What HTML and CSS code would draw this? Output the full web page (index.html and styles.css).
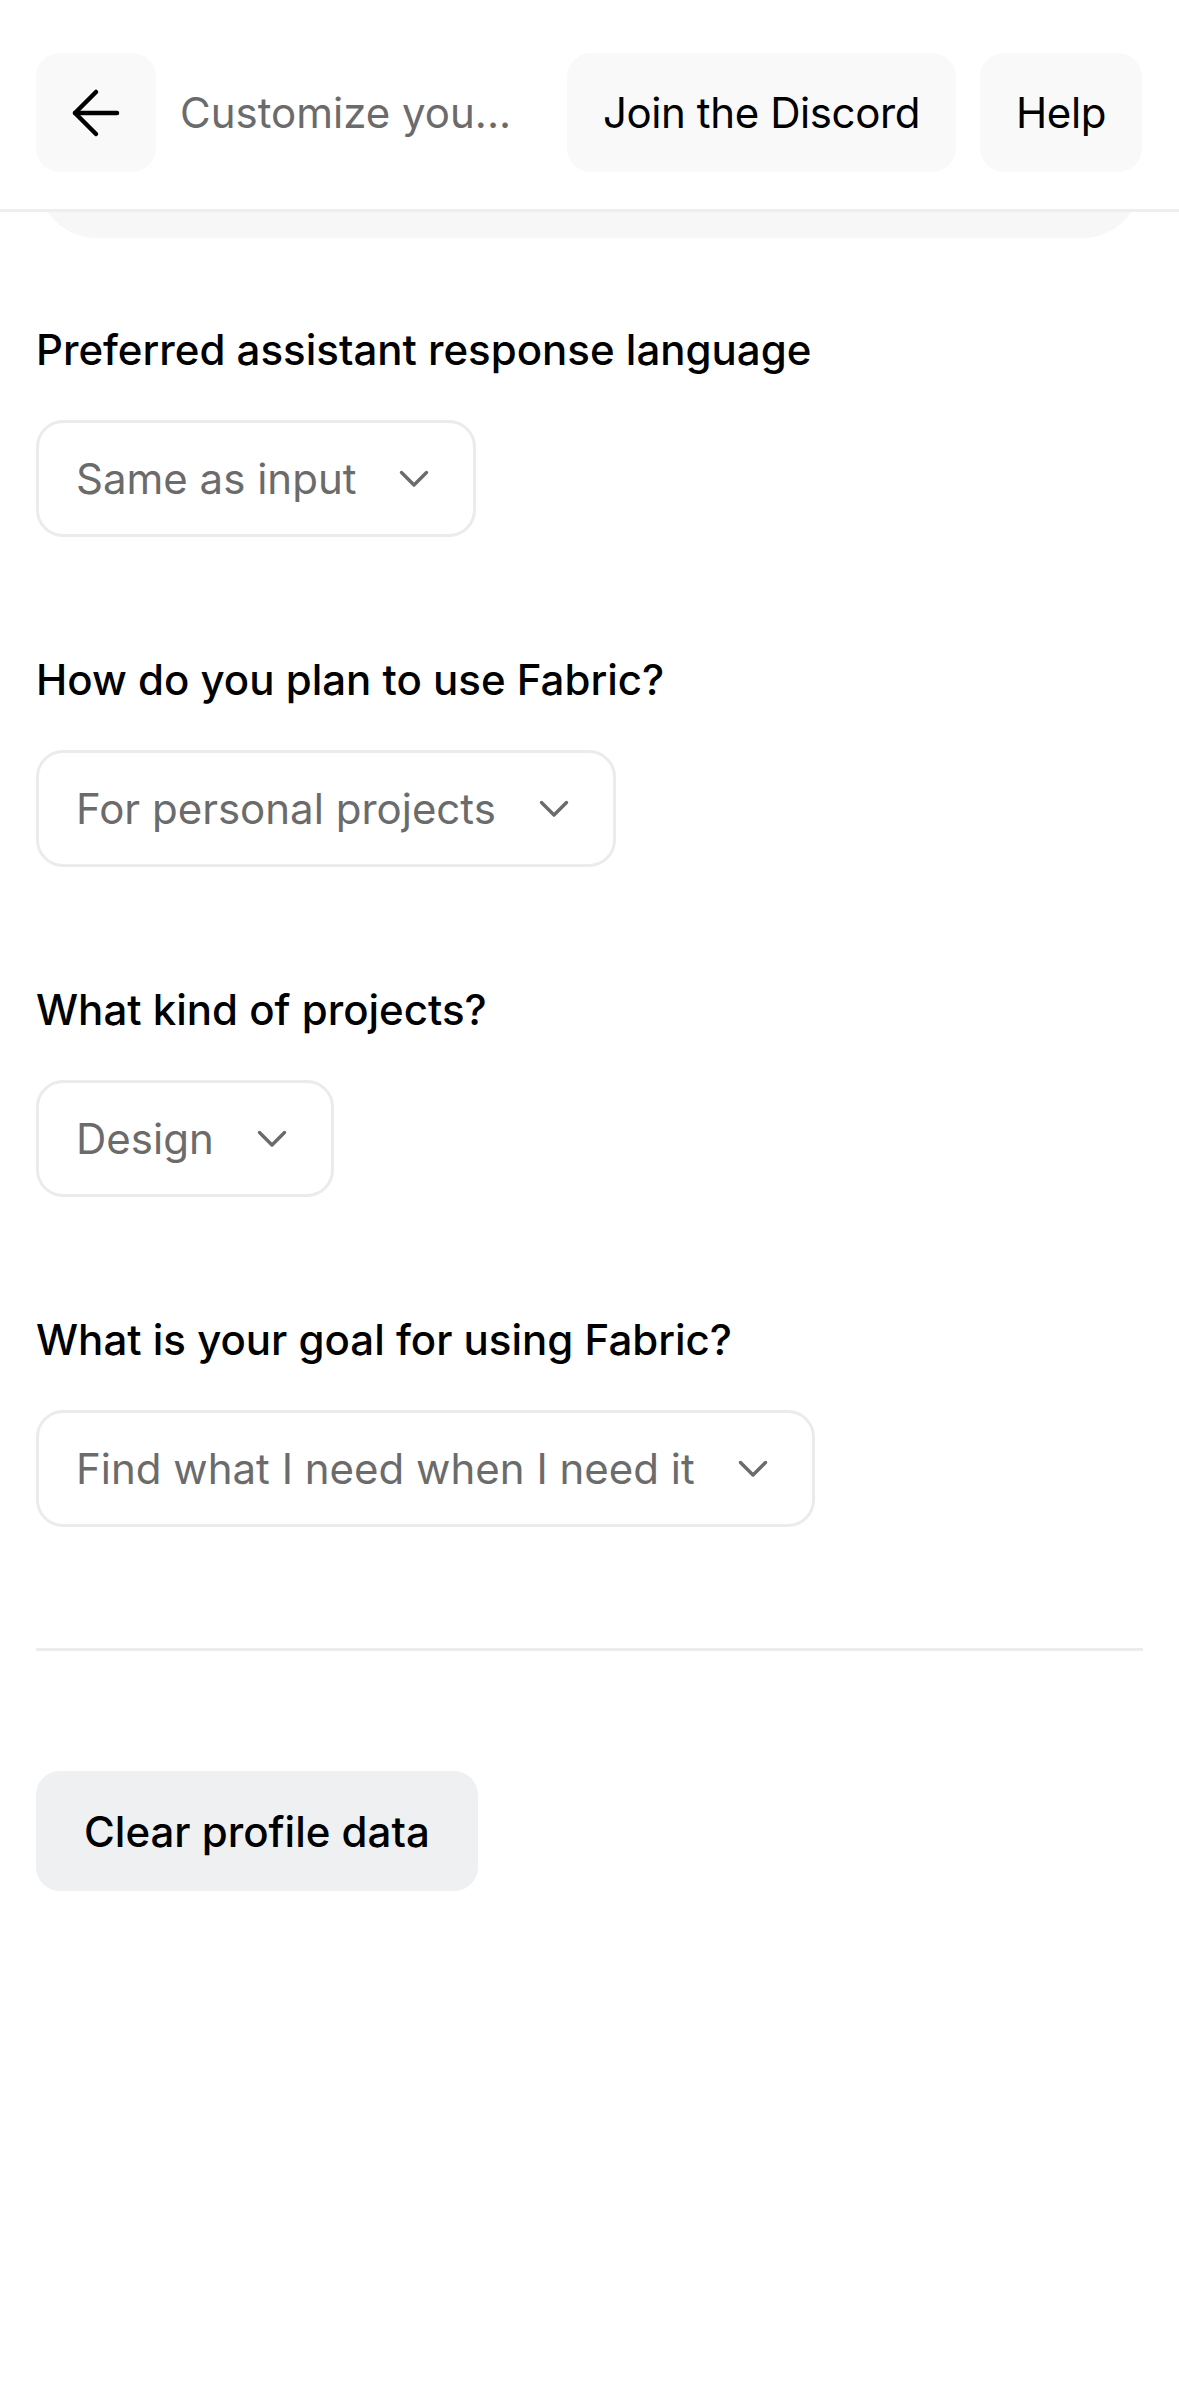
FILE: index.html
```html
<!DOCTYPE html>
<html lang="en">
<head>
<meta charset="utf-8">
<title>Customize your profile</title>
<link rel="stylesheet" href="styles.css">
</head>
<body>
<header class="topbar">
  <button class="icon-btn" aria-label="Back">
    <svg width="72" height="72" viewBox="0 0 24 24" fill="none" stroke="#000" stroke-width="1.5" stroke-linecap="round" stroke-linejoin="round"><path d="M19 12H5"/><path d="M12 19l-7-7 7-7"/></svg>
  </button>
  <div class="title">Customize you...</div>
  <button class="pill-btn">Join the Discord</button>
  <button class="pill-btn">Help</button>
</header>
<div class="peek"><div class="peek-card"></div></div>
<main class="content">
  <section class="field">
    <div class="label">Preferred assistant response language</div>
    <div class="select"><span>Same as input</span><svg class="chev" width="30" height="18" viewBox="0 0 30 18" fill="none" stroke="#6b6b6b" stroke-width="3.4" stroke-linecap="round" stroke-linejoin="round"><path d="M2.5 2.5L15 15L27.5 2.5"/></svg></div>
  </section>
  <section class="field">
    <div class="label">How do you plan to use Fabric?</div>
    <div class="select"><span>For personal projects</span><svg class="chev" width="30" height="18" viewBox="0 0 30 18" fill="none" stroke="#6b6b6b" stroke-width="3.4" stroke-linecap="round" stroke-linejoin="round"><path d="M2.5 2.5L15 15L27.5 2.5"/></svg></div>
  </section>
  <section class="field">
    <div class="label">What kind of projects?</div>
    <div class="select"><span>Design</span><svg class="chev" width="30" height="18" viewBox="0 0 30 18" fill="none" stroke="#6b6b6b" stroke-width="3.4" stroke-linecap="round" stroke-linejoin="round"><path d="M2.5 2.5L15 15L27.5 2.5"/></svg></div>
  </section>
  <section class="field">
    <div class="label">What is your goal for using Fabric?</div>
    <div class="select"><span>Find what I need when I need it</span><svg class="chev" width="30" height="18" viewBox="0 0 30 18" fill="none" stroke="#6b6b6b" stroke-width="3.4" stroke-linecap="round" stroke-linejoin="round"><path d="M2.5 2.5L15 15L27.5 2.5"/></svg></div>
  </section>
  <hr class="divider">
  <button class="clear-btn">Clear profile data</button>
</main>
</body>
</html>
```
FILE: styles.css
```css
* { box-sizing: border-box; }
html, body { margin: 0; padding: 0; background: #ffffff; }
body {
  font-family: Inter, "Noto Sans", "Liberation Sans", sans-serif;
  font-size: 42px;
  color: #000;
}
button { font-family: inherit; font-size: inherit; border: none; cursor: pointer; margin: 0; }

.topbar {
  display: flex;
  align-items: center;
  gap: 24px;
  padding: 53px 37px 37px 36px;
  border-bottom: 3px solid #eeeeee;
}
.icon-btn {
  width: 120px;
  height: 119px;
  flex: 0 0 auto;
  background: #f9f9f9;
  border-radius: 24px;
  display: flex;
  align-items: center;
  justify-content: center;
  padding: 0;
}
.title {
  flex: 1 1 auto;
  min-width: 0;
  color: #6b6b6b;
  white-space: nowrap;
  overflow: hidden;
  text-overflow: ellipsis;
  line-height: 60px;
}
.pill-btn {
  flex: 0 0 auto;
  height: 119px;
  padding: 0 36px;
  background: #f9f9f9;
  border-radius: 24px;
  color: #000;
  font-weight: 400;
  letter-spacing: -0.4px;
}

.peek {
  margin: 0 37px;
  height: 26px;
  overflow: hidden;
}
.peek-card {
  height: 200px;
  margin-top: -174px;
  background: #f7f7f7;
  border-radius: 60px;
}

.content {
  padding: 82px 36px 0 36px;
}
.field { margin-bottom: 113px; }
.field:last-of-type { margin-bottom: 0; }
.label {
  line-height: 60px;
  font-weight: 500;
  margin-bottom: 40px;
}
.select {
  display: inline-flex;
  align-items: center;
  gap: 43px;
  height: 117px;
  padding: 0 44px 0 37px;
  border: 3px solid #ebebeb;
  border-radius: 27px;
  color: #6b6b6b;
}
.chev { flex: 0 0 auto; }

.divider {
  border: none;
  height: 3px;
  background: #ececec;
  margin: 121px 0 120px 0;
}
.clear-btn {
  height: 120px;
  padding: 0 48px;
  background: #eff0f1;
  border-radius: 24px;
  color: #000;
  font-weight: 500;
}
```
